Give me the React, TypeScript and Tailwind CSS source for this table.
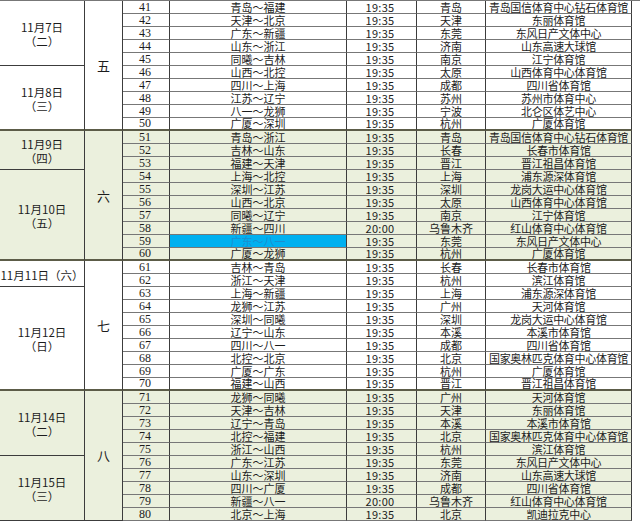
import React from "react"

type Row = [number, string, string, string, string]

const rows: Row[] = [
  [41, "青岛～福建", "19:35", "青岛", "青岛国信体育中心钻石体育馆"],
  [42, "天津～北京", "19:35", "天津", "东丽体育馆"],
  [43, "广东～新疆", "19:35", "东莞", "东风日产文体中心"],
  [44, "山东～浙江", "19:35", "济南", "山东高速大球馆"],
  [45, "同曦～吉林", "19:35", "南京", "江宁体育馆"],
  [46, "山西～北控", "19:35", "太原", "山西体育中心体育馆"],
  [47, "四川～上海", "19:35", "成都", "四川省体育馆"],
  [48, "江苏～辽宁", "19:35", "苏州", "苏州市体育中心"],
  [49, "八一～龙狮", "19:35", "宁波", "北仑区体艺中心"],
  [50, "广厦～深圳", "19:35", "杭州", "广厦体育馆"],
  [51, "青岛～浙江", "19:35", "青岛", "青岛国信体育中心钻石体育馆"],
  [52, "吉林～山东", "19:35", "长春", "长春市体育馆"],
  [53, "福建～天津", "19:35", "晋江", "晋江祖昌体育馆"],
  [54, "上海～北控", "19:35", "上海", "浦东源深体育馆"],
  [55, "深圳～江苏", "19:35", "深圳", "龙岗大运中心体育馆"],
  [56, "山西～北京", "19:35", "太原", "山西体育中心体育馆"],
  [57, "同曦～辽宁", "19:35", "南京", "江宁体育馆"],
  [58, "新疆～四川", "20:00", "乌鲁木齐", "红山体育中心体育馆"],
  [59, "广东～八一", "19:35", "东莞", "东风日产文体中心"],
  [60, "广厦～龙狮", "19:35", "杭州", "广厦体育馆"],
  [61, "吉林～青岛", "19:35", "长春", "长春市体育馆"],
  [62, "浙江～天津", "19:35", "杭州", "滨江体育馆"],
  [63, "上海～新疆", "19:35", "上海", "浦东源深体育馆"],
  [64, "龙狮～江苏", "19:35", "广州", "天河体育馆"],
  [65, "深圳～同曦", "19:35", "深圳", "龙岗大运中心体育馆"],
  [66, "辽宁～山东", "19:35", "本溪", "本溪市体育馆"],
  [67, "四川～八一", "19:35", "成都", "四川省体育馆"],
  [68, "北控～北京", "19:35", "北京", "国家奥林匹克体育中心体育馆"],
  [69, "广厦～广东", "19:35", "杭州", "广厦体育馆"],
  [70, "福建～山西", "19:35", "晋江", "晋江祖昌体育馆"],
  [71, "龙狮～同曦", "19:35", "广州", "天河体育馆"],
  [72, "天津～吉林", "19:35", "天津", "东丽体育馆"],
  [73, "辽宁～青岛", "19:35", "本溪", "本溪市体育馆"],
  [74, "北控～福建", "19:35", "北京", "国家奥林匹克体育中心体育馆"],
  [75, "浙江～山西", "19:35", "杭州", "滨江体育馆"],
  [76, "广东～江苏", "19:35", "东莞", "东风日产文体中心"],
  [77, "山东～深圳", "19:35", "济南", "山东高速大球馆"],
  [78, "四川～广厦", "19:35", "成都", "四川省体育馆"],
  [79, "新疆～八一", "20:00", "乌鲁木齐", "红山体育中心体育馆"],
  [80, "北京～上海", "19:35", "北京", "凯迪拉克中心"],
]

// date blocks keyed by first row
const dates: Record<number, { lines: string[]; span: string; rows: number }> = {
  41: { lines: ["11月7日", "（二）"], span: "row-span-5", rows: 5 },
  46: { lines: ["11月8日", "（三）"], span: "row-span-5", rows: 5 },
  51: { lines: ["11月9日", "（四）"], span: "row-span-3", rows: 3 },
  54: { lines: ["11月10日", "（五）"], span: "row-span-7", rows: 7 },
  61: { lines: ["11月11日（六）"], span: "row-span-2", rows: 2 },
  63: { lines: ["11月12日", "（日）"], span: "row-span-8", rows: 8 },
  71: { lines: ["11月14日", "（二）"], span: "row-span-5", rows: 5 },
  76: { lines: ["11月15日", "（三）"], span: "row-span-5", rows: 5 },
}

const rounds: Record<number, string> = { 41: "五", 51: "六", 61: "七", 71: "八" }

const isGreen = (n: number) => (n >= 51 && n <= 60) || n >= 71
const isGroupEnd = (n: number) => n === 50 || n === 60 || n === 70

const thick = "border-b-2 border-b-[#5c5c48]"

export default function App() {
  const cells: React.ReactNode[] = []

  rows.forEach(([n, match, time, city, venue]) => {
    const bg = isGreen(n) ? "bg-[#ebf0dd]" : "bg-white"
    const bottom = isGroupEnd(n) ? thick : "border-b border-b-[#777]"
    const cell = `flex items-center justify-center border-r border-r-[#3c3c3c] whitespace-nowrap leading-[11px] ${bottom}`

    const d = dates[n]
    if (d) {
      const dBottom = isGroupEnd(n + d.rows - 1) ? thick : "border-b border-b-[#3c3c3c]"
      cells.push(
        <div
          key={`d${n}`}
          className={`${d.span} ${bg} flex flex-col items-center justify-center border-r border-r-[#3c3c3c] ${dBottom} leading-[14px] pt-[2px] text-[11.5px]`}
        >
          {d.lines.map((l) => (
            <span key={l}>{l}</span>
          ))}
        </div>
      )
    }

    const r = rounds[n]
    if (r) {
      cells.push(
        <div
          key={`r${n}`}
          className={`row-span-10 ${bg} flex items-center justify-center border-r border-r-[#3c3c3c] ${n === 71 ? "border-b border-b-[#3c3c3c]" : thick} text-[13px]`}
        >
          {r}
        </div>
      )
    }

    const hl = n === 59
    cells.push(
      <div key={`n${n}`} className={`${cell} ${bg} font-['Liberation_Serif',serif] text-[12px] pr-[2px]`}>
        {n}
      </div>,
      <div key={`m${n}`} className={`${cell} ${hl ? "bg-[#00b0f0] text-[#1a8fd0]" : bg}`}>
        {match}
      </div>,
      <div key={`t${n}`} className={`${cell} ${bg} pr-[3px] tracking-[0.3px]`}>
        {time}
      </div>,
      <div key={`c${n}`} className={`${cell} ${bg}`}>
        {city}
      </div>,
      <div key={`v${n}`} className={`${cell} ${bg} tracking-[-0.3px]`}>
        {venue}
      </div>,
      <div key={`f${n}`} className="bg-white" />
    )
  })

  return (
    <div className="w-[640px] h-[522px] overflow-hidden bg-white">
      <div className="grid grid-cols-[85px_38px_47px_177px_70px_69px_146px_8px] grid-rows-[repeat(40,13px)] border-t border-t-[#777] text-[11px] leading-none text-[#1c1c1c] font-['Noto_Sans_CJK_SC','Noto_Sans',sans-serif]">
        {cells}
      </div>
    </div>
  )
}
